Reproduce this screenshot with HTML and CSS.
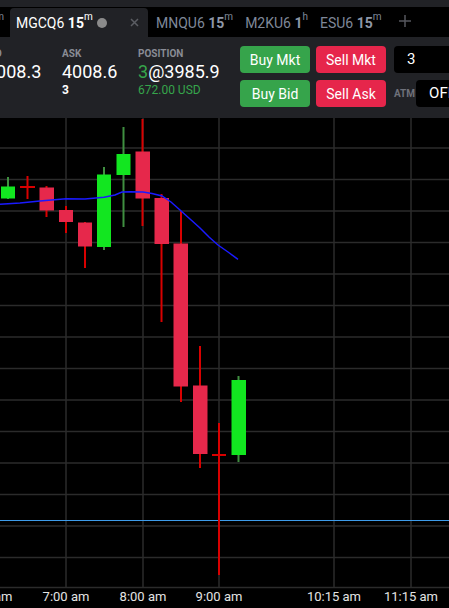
FILE: index.html
```html
<!DOCTYPE html>
<html lang="en">
<head>
    <meta charset="UTF-8">
    <title>MGCQ6 15m</title>
    <link rel="stylesheet" href="styles.css">
</head>
<body>
    <div class="topStrip"></div>

    <!-- chart tabs -->
    <div class="tabs">
        <div class="tab tabCut">MESU6 <b>15</b><sup>m</sup></div>
        <div class="tab active">
            MGCQ6&nbsp;<b>15</b><sup>m</sup>
            <span class="dot"></span>
            <svg class="close" width="9" height="9" viewBox="0 0 9 9"><path d="M1 1L8 8M8 1L1 8"/></svg>
        </div>
        <div class="tab">MNQU6&nbsp;<b>15</b><sup>m</sup></div>
        <div class="tab">M2KU6&nbsp;<b>1</b><sup>h</sup></div>
        <div class="tab">ESU6&nbsp;<b>15</b><sup>m</sup></div>
        <svg class="addTab" width="12" height="12" viewBox="0 0 12 12"><path d="M6 0V12M0 6H12"/></svg>
    </div>

    <!-- quote + order panel -->
    <div class="panel">
        <div class="quotes">
            <div class="quote">
                <div class="label">BID</div>
                <div class="value">4008.3</div>
                <div class="size">&nbsp;</div>
            </div>
            <div class="quote">
                <div class="label">ASK</div>
                <div class="value">4008.6</div>
                <div class="size">3</div>
            </div>
            <div class="quote">
                <div class="label">POSITION</div>
                <div class="value"><span class="green">3</span>@3985.9</div>
                <div class="size pnl">672.00 USD</div>
            </div>
        </div>
        <div class="orders">
            <div class="orderRow">
                <button class="btn buy">Buy Mkt</button>
                <button class="btn sell">Sell Mkt</button>
                <div class="field qty">3</div>
            </div>
            <div class="orderRow">
                <button class="btn buy">Buy Bid</button>
                <button class="btn sell">Sell Ask</button>
                <span class="atm">ATM</span>
                <div class="field off">OFF</div>
            </div>
        </div>
    </div>

    <!-- price chart -->
    <svg class="plot" viewBox="0 118 449 490" width="449" height="490">
        <g class="grid">
            <line x1="66" y1="118" x2="66" y2="587"/>
            <line x1="143" y1="118" x2="143" y2="587"/>
            <line x1="219" y1="118" x2="219" y2="587"/>
            <line x1="334" y1="118" x2="334" y2="587"/>
            <line x1="411" y1="118" x2="411" y2="587"/>
            <line x1="0" y1="148" x2="449" y2="148"/>
            <line x1="0" y1="179.5" x2="449" y2="179.5"/>
            <line x1="0" y1="211" x2="449" y2="211"/>
            <line x1="0" y1="242.5" x2="449" y2="242.5"/>
            <line x1="0" y1="274" x2="449" y2="274"/>
            <line x1="0" y1="305.5" x2="449" y2="305.5"/>
            <line x1="0" y1="337" x2="449" y2="337"/>
            <line x1="0" y1="368.5" x2="449" y2="368.5"/>
            <line x1="0" y1="400" x2="449" y2="400"/>
            <line x1="0" y1="431.5" x2="449" y2="431.5"/>
            <line x1="0" y1="463" x2="449" y2="463"/>
            <line x1="0" y1="494.5" x2="449" y2="494.5"/>
            <line x1="0" y1="526" x2="449" y2="526"/>
            <line x1="0" y1="557.5" x2="449" y2="557.5"/>
            <line x1="0" y1="587.5" x2="449" y2="587.5"/>
        </g>

        <line class="avgPrice" x1="0" y1="520.5" x2="449" y2="520.5"/>

        <!-- candles -->
        <g class="up"><line class="wick" x1="8" y1="177" x2="8" y2="199"/><rect class="body" x="1" y="186.5" width="14" height="12"/></g>
        <g class="down"><line class="wick" x1="27.5" y1="176" x2="27.5" y2="199"/><line class="wick" x1="20" y1="187" x2="35" y2="187"/></g>
        <g class="down"><line class="wick" x1="46.5" y1="186" x2="46.5" y2="217"/><rect class="body" x="39.5" y="187.5" width="14.5" height="23"/></g>
        <g class="down"><line class="wick" x1="66" y1="206" x2="66" y2="233"/><rect class="body" x="59" y="210" width="14" height="12"/></g>
        <g class="down"><line class="wick" x1="85" y1="222" x2="85" y2="268"/><rect class="body" x="78" y="222.5" width="14" height="24"/></g>
        <g class="up"><line class="wick" x1="104" y1="167" x2="104" y2="250"/><rect class="body" x="97" y="174.5" width="14" height="72.5"/></g>
        <g class="up"><line class="wick" x1="123.5" y1="127" x2="123.5" y2="227"/><rect class="body" x="116.5" y="154" width="14" height="21"/></g>
        <g class="down"><line class="wick" x1="142.5" y1="119" x2="142.5" y2="226"/><rect class="body" x="135.5" y="151.5" width="14.5" height="47"/></g>
        <g class="down"><line class="wick" x1="161.5" y1="194" x2="161.5" y2="322"/><rect class="body" x="154.5" y="198" width="14.5" height="46"/></g>
        <g class="down"><line class="wick" x1="181" y1="211" x2="181" y2="402"/><rect class="body" x="173.5" y="243.5" width="14.5" height="143"/></g>
        <g class="down"><line class="wick" x1="200" y1="346" x2="200" y2="468"/><rect class="body" x="193" y="385.5" width="14.5" height="68.5"/></g>
        <g class="down"><line class="wick" x1="219" y1="423" x2="219" y2="575"/><line class="wick" x1="212" y1="455" x2="226" y2="455"/></g>
        <g class="up"><line class="wick" x1="238.5" y1="376" x2="238.5" y2="462"/><rect class="body" x="231.5" y="380" width="14.5" height="75"/></g>

        <polyline class="ma" points="0,204.3 20,203 40,201 66,198.7 85,199 104,197.3 115,195 122,192 130,191.7 143,192 152,193.5 162,196 171,202 180,210 190,219 200,228 209,237 218,245 228,252 238,259.3"/>

        <g class="timeAxis">
            <text x="-11" y="601">6:00 am</text>
            <text x="66" y="601">7:00 am</text>
            <text x="143" y="601">8:00 am</text>
            <text x="219" y="601">9:00 am</text>
            <text x="334" y="601">10:15 am</text>
            <text x="411" y="601">11:15 am</text>
        </g>
    </svg>
</body>
</html>
```

FILE: styles.css
```css
/* Layout geral da tela do gráfico */
body {
    margin: 0;
    width: 449px;
    height: 608px;
    overflow: hidden;
    background-color: #000;
    font-family: Roboto, "Liberation Sans", sans-serif;
    color: #fff;
}

.topStrip {
    height: 7px;
    background-color: #212226;
}

/* Abas */
.tabs {
    display: flex;
    align-items: flex-end;
    height: 30px;
    background-color: #000;
    white-space: nowrap;
}

.tab {
    display: flex;
    align-items: center;
    height: 29px;
    padding: 0 6px;
    font-size: 14px;
    color: #7f8899;
}

.tab b {
    font-weight: 700;
    color: #8e97a8;
}

.tab sup {
    font-size: 10px;
    line-height: 0;
    position: relative;
    top: -6px;
}

.tabCut {
    width: 4px;
    padding: 0;
    justify-content: flex-end;
    overflow: hidden;
    margin-right: 6px;
}

.tab.active {
    width: 138px;
    box-sizing: border-box;
    padding: 0 9px 0 6px;
    background-color: #212226;
    border-radius: 4px 4px 0 0;
    color: #fff;
    margin-right: 2px;
}

.tab.active b {
    color: #fff;
}

.dot {
    width: 10px;
    height: 10px;
    margin-left: 4px;
    border-radius: 50%;
    background-color: #8b8b8b;
}

.close {
    margin-left: auto;
    stroke: #5b5d63;
    stroke-width: 1.5;
}

.addTab {
    margin: 0 0 10px 11px;
    stroke: #55575d;
    stroke-width: 1.5;
}

/* Painel de cotação e ordens */
.panel {
    display: flex;
    height: 81px;
    padding-top: 9px;
    box-sizing: border-box;
    background-color: #212226;
    overflow: hidden;
}

.quotes {
    display: flex;
    width: 254px;
    margin-left: -14px;
    flex-shrink: 0;
}

.quote {
    width: 76px;
    flex-shrink: 0;
    white-space: nowrap;
}

.quote .label {
    font-size: 10px;
    font-weight: 700;
    line-height: 12px;
    color: #898c95;
    margin-top: 2px;
}

.quote .value {
    font-size: 18px;
    line-height: 18px;
    margin-top: 3px;
}

.quote .size {
    font-size: 12px;
    font-weight: 700;
    line-height: 15px;
    margin-top: 2px;
}

.green {
    color: #36a54b;
}

.quote .pnl {
    font-weight: 400;
    color: #36a54b;
}

.orders {
    display: flex;
    flex-direction: column;
    gap: 7px;
    flex-shrink: 0;
}

.orderRow {
    display: flex;
    align-items: center;
    gap: 6px;
}

.btn {
    width: 70px;
    height: 27px;
    border: none;
    border-radius: 4px;
    font-family: inherit;
    font-size: 14px;
    color: #fff;
    padding: 0;
}

.btn.buy {
    background-color: #36a44b;
}

.btn.sell {
    background-color: #e6264b;
}

.field {
    height: 27px;
    width: 80px;
    box-sizing: border-box;
    background-color: #000;
    border-radius: 4px;
    font-size: 15px;
    line-height: 27px;
    padding-left: 13px;
    flex-shrink: 0;
}

.qty {
    margin-left: 2px;
}

.atm {
    margin-left: 2px;
    font-size: 10px;
    font-weight: 700;
    color: #6f717a;
}

.off {
    margin-left: -5px;
}

/* Gráfico */
.plot {
    display: block;
    background-color: #000;
}

.grid line {
    stroke: #2b2b2b;
    stroke-width: 1.5;
}

.avgPrice {
    stroke: #3d9be9;
    stroke-width: 1;
}

.wick {
    stroke-width: 2;
}

.down .wick {
    stroke: #d90000;
}

.down .body {
    fill: #e6284b;
}

.up .wick {
    stroke: #3f8f40;
}

.up .body {
    fill: #12e620;
}

.ma {
    fill: none;
    stroke: #1a1aff;
    stroke-width: 1.5;
}

.timeAxis text {
    font-family: Roboto, "Liberation Sans", sans-serif;
    font-size: 13px;
    fill: #e4e4e4;
    text-anchor: middle;
}
```
